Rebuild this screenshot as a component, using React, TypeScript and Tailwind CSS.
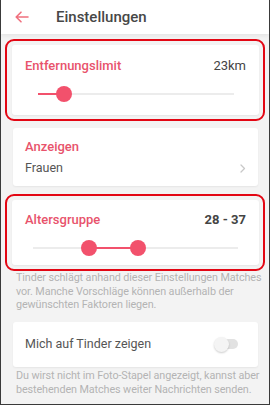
import React from 'react';

const font = { fontFamily: 'Roboto, "Liberation Sans", sans-serif' };

function Slider({ left, from, to, right }: { left: number; from: number; to: number; right: number }) {
  return (
    <div className="relative h-4 mt-auto" style={{ marginLeft: left, marginRight: right }}>
      <div className="absolute left-0 right-0 top-[7px] h-[2px] bg-[#ececec]" />
      <div
        className="absolute top-[7px] h-[2px] bg-[#f2516c]"
        style={{ left: from, width: to - from }}
      />
      {from > 0 && (
        <div className="absolute top-0 w-4 h-4 rounded-full bg-[#f2516c]" style={{ left: from - 8 }} />
      )}
      <div className="absolute top-0 w-4 h-4 rounded-full bg-[#f2516c]" style={{ left: to - 8 }} />
    </div>
  );
}

export default function App() {
  return (
    <div
      className="w-[270px] h-[405px] bg-[#f3f3f3] border-x border-b border-[#3a3a3a] overflow-hidden flex flex-col"
      style={font}
    >
      <header className="h-[34px] shrink-0 bg-white flex items-center shadow-[0_2px_4px_rgba(0,0,0,0.06)]">
        <svg width="14" height="12" viewBox="0 0 14 12" className="ml-[14px]" fill="none" stroke="#f0707e" strokeWidth="1.6" strokeLinecap="round" strokeLinejoin="round">
          <path d="M13 6H1.5M6 1.2L1.2 6 6 10.8" />
        </svg>
        <h1 className="ml-[27px] text-[15px] text-[#474747] font-medium">Einstellungen</h1>
      </header>

      <div className="mt-[5px] mx-[4px] border-2 border-[#e30613] rounded-[9px] pt-[4px] pb-[4px] pl-[5px] pr-[4px]">
        <div className="h-[70px] bg-white rounded-[3px] shadow-[0_1px_2px_rgba(0,0,0,0.06)] flex flex-col px-[13px] pt-[13px] pb-[13px]">
          <div className="flex justify-between items-center text-[13px] leading-4">
            <span className="text-[#e8536c] font-medium">Entfernungslimit</span>
            <span className="text-[#444]">23km</span>
          </div>
          <Slider left={13} right={12} from={0} to={26} />
        </div>
      </div>

      <div className="mt-[7px] ml-[12px] mr-[11px] h-[58px] bg-white rounded-[3px] shadow-[0_1px_2px_rgba(0,0,0,0.06)] px-[12px] pt-[11px]">
        <div className="text-[13px] leading-4 text-[#e8536c] font-medium">Anzeigen</div>
        <div className="mt-[5px] flex justify-between items-center text-[12.5px] leading-4 text-[#555]">
          <span>Frauen</span>
          <svg width="6" height="9" viewBox="0 0 6 9" fill="none" stroke="#c8c8c8" strokeWidth="1.3" strokeLinecap="round" strokeLinejoin="round">
            <path d="M1 1l3.5 3.5L1 8" />
          </svg>
        </div>
      </div>

      <div className="mt-[8px] mx-[4px] border-2 border-[#e30613] rounded-[9px] pt-[4px] pb-[4px] pl-[5px] pr-[4px]">
        <div className="h-[65px] bg-white rounded-[3px] shadow-[0_1px_2px_rgba(0,0,0,0.06)] flex flex-col px-[13px] pt-[12px] pb-[9px]">
          <div className="flex justify-between items-center text-[13px] leading-4">
            <span className="text-[#e8536c] font-medium">Altersgruppe</span>
            <span className="text-[#444] font-bold">28 - 37</span>
          </div>
          <Slider left={8} right={8} from={56} to={105} />
        </div>
      </div>

      <p className="pl-[15px] pr-[7px] text-[10.8px] tracking-[-0.1px] leading-[13.5px] text-[#b4b4b4]">
        Tinder schlägt anhand dieser Einstellungen Matches vor. Manche Vorschläge können außerhalb der gewünschten Faktoren liegen.
      </p>

      <div className="mt-[10px] ml-[12px] mr-[11px] h-[45px] bg-white rounded-[3px] shadow-[0_1px_2px_rgba(0,0,0,0.06)] px-[12px] flex items-center justify-between">
        <span className="text-[12.5px] text-[#555]">Mich auf Tinder zeigen</span>
        <div className="relative w-[24px] h-[15px] mr-[8px]">
          <div className="absolute left-[6px] right-0 top-[2.5px] h-[10px] rounded-full bg-[#e2e2e2]" />
          <div className="absolute left-0 top-0 w-[15px] h-[15px] rounded-full bg-[#f4f4f4] shadow-[0_1px_2px_rgba(0,0,0,0.2)]" />
        </div>
      </div>

      <p className="mt-[2px] pl-[15px] pr-[7px] text-[10.8px] tracking-[-0.1px] leading-[14px] text-[#b4b4b4]">
        Du wirst nicht im Foto-Stapel angezeigt, kannst aber bestehenden Matches weiter Nachrichten senden.
      </p>
    </div>
  );
}
